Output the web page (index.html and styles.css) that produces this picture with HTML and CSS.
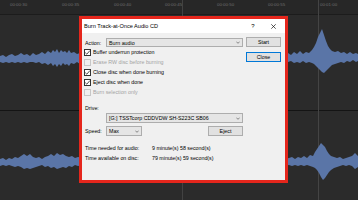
FILE: index.html
```html
<!DOCTYPE html>
<html>
<head>
<meta charset="utf-8">
<link rel="stylesheet" href="styles.css">
</head>
<body>
<div class="editor">
  <svg class="canvas" width="358" height="200" viewBox="0 0 358 200">
    <rect x="0" y="0" width="358" height="200" fill="#2b2b2b"/>
    <rect x="0" y="0" width="358" height="14" fill="#272727"/>
    <rect x="0" y="14" width="358" height="1" fill="#1c1c1c"/>
    <rect x="0" y="110" width="358" height="1" fill="#141414"/>
    <g class="ruler" fill="#6e6e6e" font-size="4.4">
      <text x="10" y="6">00:00:30</text>
      <text x="62" y="6">00:00:35</text>
      <text x="114" y="6">00:00:40</text>
      <text x="165" y="6">00:00:45</text>
      <text x="217" y="6">00:00:50</text>
      <text x="268" y="6">00:00:55</text>
      <text x="320" y="6">00:01:00</text>
    </g>
    <rect x="182" y="0" width="1" height="200" fill="#424242"/>
    <rect x="318" y="0" width="1" height="200" fill="#444444"/>
    <g fill="#5a75a7">
      <polygon points="0,56 3,55 6,57 9,55 12,54 15,56 18,55 21,53 24,55 27,54 30,56 33,53 36,55 39,54 42,52 45,54 48,51 51,53 53,50 55,52 57,49 59,53 61,50 63,52 65,51 67,53 69,50 71,53 74,52 77,54 80,53 84,54 84,63 80,64 77,62 74,64 71,63 69,66 67,64 65,65 63,63 61,66 59,64 57,67 55,64 53,66 51,63 48,65 45,63 42,64 39,62 36,63 33,62 30,62 27,63 24,62 21,63 18,62 15,63 12,62 9,63 6,62 3,63 0,62"/>
      <polygon points="284,54 288,53 291,55 294,52 297,54 300,51 303,54 306,52 309,53 312,50 314,47 316,43 318,37 320,33 322,29 324,35 326,41 328,46 330,49 332,51 335,52 338,51 341,53 344,52 347,54 350,52 353,54 356,53 358,54 358,61 356,62 353,60 350,62 347,61 344,63 341,62 338,63 335,64 332,65 330,67 328,69 326,71 324,73 322,72 320,70 318,68 316,66 314,64 312,63 309,62 306,63 303,61 300,63 297,62 294,63 291,61 288,62 284,61"/>
      <polygon points="0,159 3,158 6,160 9,158 12,159 15,157 18,158 21,156 24,154 27,156 30,154 33,157 36,158 39,157 42,159 45,157 48,156 51,154 54,156 57,153 60,155 63,154 66,156 69,157 72,156 75,158 78,157 84,158 84,165 78,166 75,165 72,167 69,166 66,168 63,167 60,168 57,169 54,167 51,168 48,166 45,167 42,165 39,166 36,167 33,168 30,169 27,168 24,169 21,167 18,166 15,167 12,166 9,165 6,166 3,165 0,166"/>
      <polygon points="284,159 289,158 292,157 295,159 298,157 301,158 304,156 307,158 310,155 313,156 315,152 317,149 319,146 321,143 323,145 325,147 327,151 329,154 331,156 334,157 337,158 340,157 343,159 346,158 349,157 352,156 355,153 358,156 358,167 355,169 352,166 349,165 346,166 343,165 340,166 337,167 334,168 331,170 329,172 327,175 325,178 323,180 321,177 319,173 317,170 315,168 313,167 310,166 307,165 304,166 301,165 298,166 295,165 292,166 289,165 284,166"/>
    </g>
  </svg>

  <div class="dialog">
    <div class="titlebar">
      <span class="title">Burn Track-at-Once Audio CD</span>
      <span class="help">?</span>
      <span class="xbtn"><svg width="5" height="5" viewBox="0 0 5 5"><path d="M0.3 0.3 L4.7 4.7 M4.7 0.3 L0.3 4.7" stroke="#111" stroke-width="0.7" fill="none"/></svg></span>
    </div>
    <div class="body">
      <div class="main">
        <div class="action-row">
          <span class="lbl">Action:</span>
          <div class="combo">
            <span class="combo-text">Burn audio</span>
            <svg class="chev" width="4" height="3" viewBox="0 0 4 3"><path d="M0.3 0.6 L2 2.3 L3.7 0.6" stroke="#444" stroke-width="0.6" fill="none"/></svg>
          </div>
        </div>
        <div class="check on"><span class="box"><svg width="7" height="7" viewBox="0 0 7 7"><path d="M1.2 3.6 L2.8 5.2 L5.9 1.6" stroke="#222" stroke-width="0.8" fill="none"/></svg></span><span>Buffer underrun protection</span></div>
        <div class="check disabled"><span class="box"></span><span>Erase RW disc before burning</span></div>
        <div class="check on"><span class="box"><svg width="7" height="7" viewBox="0 0 7 7"><path d="M1.2 3.6 L2.8 5.2 L5.9 1.6" stroke="#222" stroke-width="0.8" fill="none"/></svg></span><span>Close disc when done burning</span></div>
        <div class="check on"><span class="box"><svg width="7" height="7" viewBox="0 0 7 7"><path d="M1.2 3.6 L2.8 5.2 L5.9 1.6" stroke="#222" stroke-width="0.8" fill="none"/></svg></span><span>Eject disc when done</span></div>
        <div class="check disabled"><span class="box"></span><span>Burn selection only</span></div>
        <div class="drive-label">Drive:</div>
        <div class="combo drive">
          <span class="combo-text">[G:] TSSTcorp CDDVDW SH-S223C SB06</span>
          <svg class="chev" width="4" height="3" viewBox="0 0 4 3"><path d="M0.3 0.6 L2 2.3 L3.7 0.6" stroke="#444" stroke-width="0.6" fill="none"/></svg>
        </div>
        <div class="speed-row">
          <span class="lbl">Speed:</span>
          <div class="combo small">
            <span class="combo-text">Max</span>
            <svg class="chev" width="4" height="3" viewBox="0 0 4 3"><path d="M0.3 0.6 L2 2.3 L3.7 0.6" stroke="#444" stroke-width="0.6" fill="none"/></svg>
          </div>
          <button class="btn eject">Eject</button>
        </div>
        <div class="times">
          <span>Time needed for audio:</span><span>9 minute(s) 58 second(s)</span>
          <span>Time available on disc:</span><span>79 minute(s) 59 second(s)</span>
        </div>
      </div>
      <div class="side">
        <button class="btn">Start</button>
        <button class="btn default">Close</button>
      </div>
    </div>
  </div>
</div>
</body>
</html>
```

FILE: styles.css
```css
html, body {
  margin: 0;
  padding: 0;
  width: 358px;
  height: 200px;
  overflow: hidden;
  background: #2b2b2b;
  font-family: "Liberation Sans", Arial, sans-serif;
}

.editor {
  position: relative;
  width: 358px;
  height: 200px;
}

.canvas {
  display: block;
}

.ruler text {
  font-family: "Liberation Sans", Arial, sans-serif;
}

.dialog {
  position: absolute;
  left: 79px;
  top: 16px;
  width: 203px;
  height: 161px;
  border: 3px solid #e5261c;
  background: #f0f0f0;
  font-size: 5.3px;
  color: #000;
}

.titlebar {
  height: 14px;
  background: #fff;
  display: flex;
  align-items: center;
  padding: 0 7px 0 2px;
}

.title {
  flex: 1;
  font-size: 5.6px;
}

.help {
  width: 10px;
  text-align: center;
  margin-right: 10px;
  font-size: 6px;
}

.xbtn {
  width: 10px;
  display: flex;
  justify-content: center;
}

.xbtn svg {
  display: block;
}

.body {
  display: flex;
  gap: 3px;
  padding: 4px 0 0 2px;
}

.main {
  width: 159px;
  display: flex;
  flex-direction: column;
}

.side {
  width: 35px;
  display: flex;
  flex-direction: column;
  gap: 5px;
}

.action-row, .speed-row {
  display: flex;
  align-items: center;
}

.action-row {
  height: 9px;
  margin-top: 1px;
}

.lbl {
  width: 21px;
  padding-left: 1px;
}

.combo {
  box-sizing: border-box;
  height: 100%;
  flex: 1;
  display: flex;
  align-items: center;
  border: 1px solid #adadad;
  background: #e5e5e5;
  padding: 0 2px 0 2px;
}

.combo-text {
  flex: 1;
  white-space: nowrap;
}

.chev {
  display: block;
}

.check {
  height: 10px;
  display: flex;
  align-items: center;
}

.box {
  box-sizing: border-box;
  width: 7px;
  height: 7px;
  border: 1px solid #333;
  background: #fff;
  margin-right: 2px;
  position: relative;
}

.box svg {
  position: absolute;
  left: -1px;
  top: -1px;
}

.check.disabled {
  color: #a3a3a3;
}

.check.disabled .box {
  border-color: #c6c6c6;
  background: #f0f0f0;
}

.drive-label {
  height: 9px;
  margin-top: 6px;
  display: flex;
  align-items: center;
  padding-left: 1px;
}

.combo.drive {
  flex: none;
  height: 10px;
  margin-left: 22px;
  margin-top: 1px;
}

.speed-row {
  height: 10px;
  margin-top: 3px;
}

.combo.small {
  flex: none;
  width: 36px;
}

.btn {
  box-sizing: border-box;
  height: 10px;
  padding: 0;
  margin: 0;
  border: 1px solid #adadad;
  background: #e1e1e1;
  font: inherit;
  color: #000;
  text-align: center;
  line-height: 8px;
}

.btn.default {
  border-color: #0078d7;
}

.eject {
  width: 35px;
  margin-left: auto;
}

.times {
  margin-top: 7px;
  display: grid;
  grid-template-columns: 68px auto;
  grid-auto-rows: 10px;
  align-items: center;
}

.times span:nth-child(odd) {
  padding-left: 1px;
}
```
